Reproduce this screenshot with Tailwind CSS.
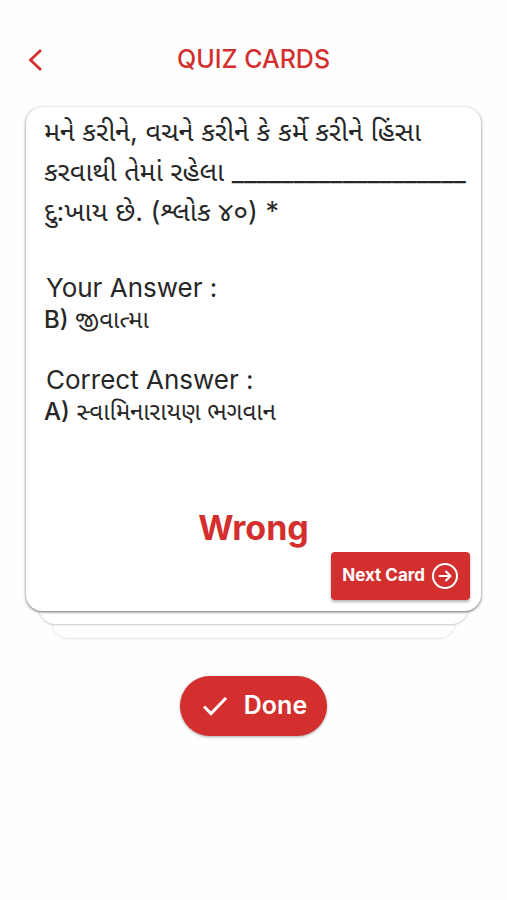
<!DOCTYPE html>
<html lang="gu">
<head>
<meta charset="utf-8">
<meta name="viewport" content="width=device-width, initial-scale=1">
<title>Quiz Cards</title>
<script src="https://cdn.jsdelivr.net/npm/@tailwindcss/browser@4"></script>
</head>
<body class="min-h-screen bg-[#fefefe] font-['Inter','Noto_Sans','Noto_Sans_Gujarati',sans-serif] text-[#272727]">
<header class="grid grid-cols-[24px_1fr_24px] items-center px-6 pt-10 text-[#d32f2f]">
  <button type="button" aria-label="Back" class="h-10 w-6">
    <svg class="h-6 w-6" viewBox="0 0 24 24" fill="none" stroke="currentColor" stroke-width="2.8"><path d="M17 2 6.5 12 17 22"/></svg>
  </button>
  <h1 class="text-center text-[25px] font-medium">QUIZ CARDS</h1>
</header>
<main class="px-[26px] pt-[27px]">
  <section class="relative z-20 flex flex-col rounded-2xl bg-white pt-[5px] pr-[11px] pb-[11px] pl-[18px] shadow-[0_1px_3px_rgba(0,0,0,0.6)]">
    <p class="text-[27px] leading-10">મને કરીને, વચને કરીને કે કર્મે કરીને હિંસા<br>કરવાથી તેમાં રહેલા ___________________<br>દુ:ખાય છે. (શ્લોક ૪૦) *</p>
    <div class="pt-10">
      <h2 class="pl-[2px] text-[26px] leading-8">Your Answer :</h2>
      <p class="text-2xl leading-8"><span class="font-medium">B)</span> જીવાત્મા</p>
    </div>
    <div class="pt-7">
      <h2 class="pl-[2px] text-[26px] leading-8">Correct Answer :</h2>
      <p class="text-2xl leading-8"><span class="font-medium">A)</span> સ્વામિનારાયણ ભગવાન</p>
    </div>
    <p class="pt-20 pr-[7px] text-center text-[34px] leading-10 font-bold text-[#d32f2f]">Wrong</p>
    <button type="button" class="mt-1 flex h-12 items-center gap-[6px] self-end rounded bg-[#d32f2f] px-[11px] text-[17px] font-bold text-white shadow-[0_2px_3px_rgba(0,0,0,0.3)]">
      Next Card
      <svg class="h-7 w-7" viewBox="0 0 28 28" fill="none" stroke="currentColor" stroke-width="2" stroke-linecap="round" stroke-linejoin="round"><circle cx="14" cy="14" r="12"/><path d="M8.5 14h11M15 9.5l4.5 4.5-4.5 4.5"/></svg>
    </button>
  </section>
  <div class="relative z-10 mx-[13px] -mt-5 h-[33px] rounded-b-2xl bg-white shadow-[0_1px_2px_rgba(0,0,0,0.22)]"></div>
  <div class="mx-[26px] -mt-5 h-[34px] rounded-b-2xl bg-white shadow-[0_1px_2px_rgba(0,0,0,0.12)]"></div>
  <div class="flex justify-center pt-[38px]">
    <button type="button" class="flex h-[60px] items-center gap-4 rounded-full bg-[#d32f2f] px-5 text-[25px] font-semibold text-white shadow-[0_1px_3px_rgba(0,0,0,0.35)]">
      <svg class="h-7 w-7" viewBox="0 0 28 28" fill="none" stroke="currentColor" stroke-width="3"><path d="m4 14.5 7 7L26 6"/></svg>
      Done
    </button>
  </div>
</main>
</body>
</html>
